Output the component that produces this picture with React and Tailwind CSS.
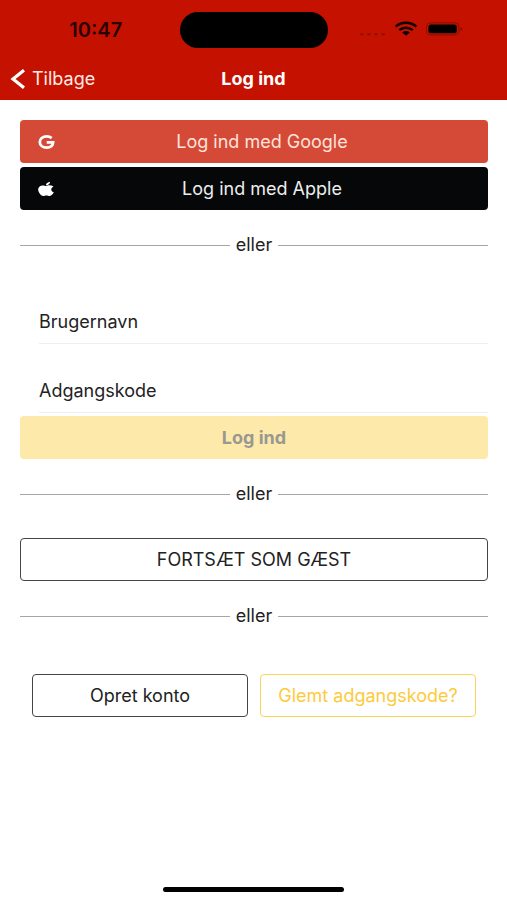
import React, { useState } from 'react';
import { FaApple } from 'react-icons/fa';
import { clsx } from 'clsx';

const StatusBar = () => (
    <div className="grid grid-cols-[1fr_148px_1fr] items-center pt-3">
        <span className="pl-3 text-center text-xl leading-6 font-semibold text-[#2a0300]">10:47</span>
        <div className="h-9 rounded-full bg-black" />
        <div className="flex items-center justify-end pr-11">
            <svg width="104" height="20" viewBox="0 0 104 20" aria-hidden="true">
                {/* No signal */}
                <g fill="#9c0f00">
                    <rect x="1" y="13" width="4" height="2.4" rx="1" />
                    <rect x="8" y="13" width="4" height="2.4" rx="1" />
                    <rect x="15" y="13" width="4" height="2.4" rx="1" />
                    <rect x="22" y="13" width="4" height="2.4" rx="1" />
                </g>
                {/* Wifi */}
                <g fill="none" stroke="#120000" strokeWidth="2.4">
                    <path d="M36.6 6.6C42.4 1.5 51.6 1.5 57.4 6.6" />
                    <path d="M40.2 10.2C44 7 50 7 53.8 10.2" />
                </g>
                <path d="M43.2 12.4C45.4 10.6 48.6 10.6 50.8 12.4L47 15.8Z" fill="#120000" />
                {/* Battery */}
                <rect x="67.5" y="2.9" width="32.5" height="12" rx="4" fill="none" stroke="#8a0d00" />
                <rect x="69.4" y="4.5" width="28.4" height="8.8" rx="2.6" fill="#000" />
                <path d="M101.6 7C103.6 7.6 103.6 10.2 101.6 10.8Z" fill="#7a0b00" />
            </svg>
        </div>
    </div>
);

const Divider = () => (
    <div className="mt-[23px] flex items-center gap-1.5">
        <div className="h-px flex-1 bg-[#a6a6a6]" />
        <span className="text-lg leading-6 text-[#222]">eller</span>
        <div className="h-px flex-1 bg-[#a6a6a6]" />
    </div>
);

const Field = ({ id, label, type = 'text', value, onChange }) => (
    <div className="ml-[19px] flex h-[69px] items-end border-b border-[#efefef] pb-[9px]">
        <label htmlFor={id} className="text-lg leading-6 text-[#222]">{label}</label>
        <input
            id={id}
            type={type}
            value={value}
            onChange={(e) => onChange(e.target.value)}
            className="h-6 min-w-0 flex-1 bg-transparent pl-3 text-lg outline-none"
        />
    </div>
);

const Button = ({ className, children, ...props }) => (
    <button
        className={clsx('flex h-[43px] w-full items-center justify-center rounded text-lg leading-6', className)}
        {...props}
    >
        {children}
    </button>
);

const SocialButton = ({ icon, className, children }) => (
    <Button type="button" className={clsx('relative', className)}>
        <span className="absolute left-[18px]">{icon}</span>
        <span className="pl-4">{children}</span>
    </Button>
);

const App = () => {
    const [username, setUsername] = useState('');
    const [password, setPassword] = useState('');

    return (
        <div className="flex min-h-screen flex-col bg-white font-[Inter,'Liberation_Sans',sans-serif]">
            <header className="bg-[#c51200] pb-[9px]">
                <StatusBar />
                <nav className="mt-[19px] grid grid-cols-3 items-center text-lg leading-6 text-white">
                    <a href="#" className="flex items-center gap-[7px] pl-[10px] text-[#ffe9e6]">
                        <svg width="15" height="20" viewBox="0 0 15 20" fill="none" stroke="#fff" strokeWidth="3.2" aria-hidden="true">
                            <path d="M14 1.2L3 10L14 18.8" />
                        </svg>
                        Tilbage
                    </a>
                    <h1 className="text-center font-bold">Log ind</h1>
                </nav>
            </header>

            <main className="flex-1 px-5 pt-5 pr-[19px]">
                <div className="flex flex-col gap-1">
                    <SocialButton
                        className="bg-[#d44a37] text-[#ffe3dc]"
                        icon={
                            <svg width="17" height="14" viewBox="0 0 17 14" fill="none" stroke="#fff" strokeWidth="2.8" aria-hidden="true">
                                <path d="M13.6 3.1C12.3 1.9 10.7 1.4 8.8 1.4C4.7 1.4 1.8 3.8 1.8 7C1.8 10.2 4.7 12.6 8.6 12.6C12.4 12.6 15 10.7 15.1 7.3H8.7" />
                            </svg>
                        }
                    >
                        Log ind med Google
                    </SocialButton>
                    <SocialButton
                        className="bg-[#050708] text-[#ededed]"
                        icon={<FaApple className="h-4 w-4 text-white" preserveAspectRatio="none" />}
                    >
                        Log ind med Apple
                    </SocialButton>
                </div>

                <Divider />

                <form className="mt-[18px]" onSubmit={(e) => e.preventDefault()}>
                    <Field id="username" label="Brugernavn" value={username} onChange={setUsername} />
                    <Field id="password" label="Adgangskode" type="password" value={password} onChange={setPassword} />
                    <Button
                        type="submit"
                        disabled={!username || !password}
                        className="mt-[3px] bg-[#ffc917] font-bold text-[#222] disabled:bg-[#fde9a9] disabled:text-[#999791]"
                    >
                        Log ind
                    </Button>
                </form>

                <Divider />

                <Button type="button" className="mt-8 border border-[#444] text-[#222]">
                    FORTSÆT SOM GÆST
                </Button>

                <Divider />

                <div className="mt-[46px] grid grid-cols-2 gap-3 px-3">
                    <Button type="button" className="border border-[#444] text-[#222]">Opret konto</Button>
                    <Button type="button" className="border border-[#fbd45c] text-[#fbcb3c]">Glemt adgangskode?</Button>
                </div>
            </main>

            {/* Home indicator */}
            <div className="mx-auto mb-2 h-[5px] w-[181px] rounded-full bg-black" />
        </div>
    );
};

export default App;
